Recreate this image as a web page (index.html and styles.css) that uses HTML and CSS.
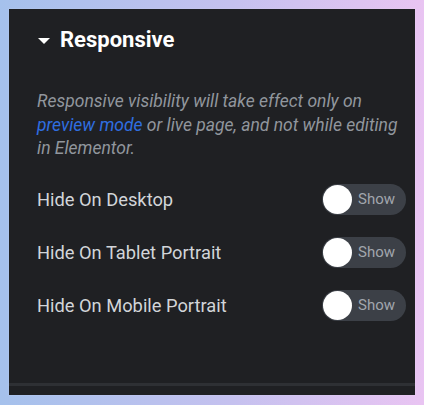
FILE: index.html
```html
<!DOCTYPE html>
<html lang="en">
<head>
  <meta charset="UTF-8" />
  <meta name="viewport" content="width=device-width, initial-scale=1.0"/>
  <title>Responsive</title>
  <link rel="stylesheet" href="styles.css">
</head>
<body>
  <div class="panel">
    <div class="section-head">
      <span class="caret"></span>
      <h3>Responsive</h3>
    </div>

    <p class="desc">Responsive visibility will take effect only on <a href="#" class="link">preview mode</a> or live page, and not while editing in Elementor.</p>

    <div class="row">
      <label>Hide On Desktop</label>
      <div class="switch"><span class="knob"></span><span class="switch-text">Show</span></div>
    </div>
    <div class="row">
      <label>Hide On Tablet Portrait</label>
      <div class="switch"><span class="knob"></span><span class="switch-text">Show</span></div>
    </div>
    <div class="row">
      <label>Hide On Mobile Portrait</label>
      <div class="switch"><span class="knob"></span><span class="switch-text">Show</span></div>
    </div>

    <div class="panel-foot"></div>
  </div>
</body>
</html>
```

FILE: styles.css
```css
html, body {
  height: 100%;
}
body {
  margin: 0;
  font-family: Roboto, "Liberation Sans", Arial, sans-serif;
  background: linear-gradient(90deg, #a5c1ec, #c5c1ef 55%, #e9c4f2);
  box-sizing: border-box;
  padding: 9px;
}
.panel {
  height: 386px;
  background: #1f2023;
  display: flex;
  flex-direction: column;
  box-shadow: 0 0 0 1px rgba(255, 255, 255, 0.06);
}
.section-head {
  display: flex;
  align-items: center;
  padding: 19px 28px 0 29px;
  height: 24px;
}
.caret {
  width: 0;
  height: 0;
  border-left: 6px solid transparent;
  border-right: 6px solid transparent;
  border-top: 6px solid #fff;
  margin-right: 10px;
  margin-top: 1px;
}
h3 {
  margin: 0;
  font-size: 22px;
  font-weight: bold;
  color: #fff;
  line-height: 24px;
}
.desc {
  margin: 38px 12px 12px 28px;
  font-size: 17.5px;
  line-height: 23.5px;
  font-style: italic;
  color: #91969d;
}
.link {
  color: #2f6ee0;
  text-decoration: none;
}
.row {
  display: flex;
  align-items: center;
  justify-content: space-between;
  height: 53px;
  padding: 0 9px 0 28px;
}
label {
  font-size: 18.3px;
  color: #d2d5d9;
}
.switch {
  display: flex;
  align-items: center;
  width: 84px;
  height: 31px;
  box-sizing: border-box;
  padding: 0 1px;
  border-radius: 16px;
  background: #3c4047;
}
.knob {
  width: 29px;
  height: 29px;
  border-radius: 50%;
  background: #fff;
}
.switch-text {
  margin-left: 6px;
  font-size: 15px;
  color: #a1a6ad;
}
.panel-foot {
  margin-top: auto;
  height: 9px;
  border-top: 3px solid #2e3034;
}
```
